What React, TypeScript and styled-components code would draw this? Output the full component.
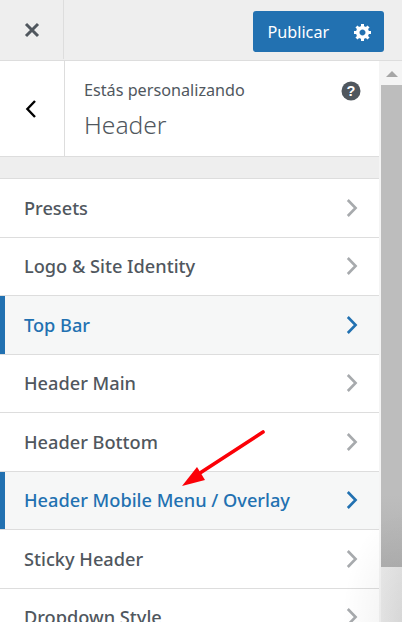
import styled, { createGlobalStyle } from "styled-components";

const GlobalStyle = createGlobalStyle`
  html, body {
    margin: 0;
    padding: 0;
    height: 100%;
    overflow: hidden;
    background: #eeeeee;
  }
  * {
    box-sizing: border-box;
  }
`;

const Page = styled.div`
  position: relative;
  width: 402px;
  height: 622px;
  overflow: hidden;
  display: flex;
  flex-direction: column;
  background: #eeeeee;
  font-family: "Noto Sans", "Open Sans", sans-serif;
`;

const TopBar = styled.div`
  flex: none;
  height: 61px;
  display: flex;
  align-items: stretch;
  justify-content: space-between;
  padding-right: 18px;
  border-bottom: 1px solid #dddddd;
`;

const CloseButton = styled.div`
  width: 64px;
  height: 59px;
  display: flex;
  align-items: center;
  justify-content: center;
  border-right: 1px solid #dddddd;
  padding: 1px 0 0 1px;
`;

const PublishGroup = styled.div`
  margin-top: 11px;
  width: 131px;
  height: 41px;
  display: flex;
  align-items: center;
  background: #2271b1;
  border-radius: 3px;
  color: #ffffff;
`;

const PublishLabel = styled.span`
  flex: 1;
  padding-left: 14.5px;
  font-size: 16.2px;
  line-height: 22px;
`;

const GearSlot = styled.span`
  width: 43px;
  display: flex;
  justify-content: center;
  padding-left: 1px;
`;

const Body = styled.div`
  flex: 1;
  display: flex;
  min-height: 0;
  background: linear-gradient(90deg, #eeeeee 379px, #f4f4f4 379px);
`;

const Panel = styled.div`
  width: 379px;
  flex: none;
`;

const SectionHead = styled.div`
  height: 96px;
  display: flex;
  background: #ffffff;
  border-bottom: 1px solid #dddddd;
`;

const BackButton = styled.div`
  width: 65px;
  display: flex;
  align-items: center;
  justify-content: center;
  border-right: 1px solid #dddddd;
  padding-right: 2px;
`;

const HeadText = styled.div`
  position: relative;
  flex: 1;
  padding: 18px 0 0 19px;
`;

const Eyebrow = styled.div`
  font-size: 16.2px;
  line-height: 22px;
  color: #50575e;
`;

const SectionTitle = styled.div`
  margin-top: 7px;
  font-size: 24.6px;
  font-weight: 300;
  line-height: 33px;
  color: #50575e;
`;

const HelpBadge = styled.span`
  position: absolute;
  top: 20px;
  right: 18px;
  display: flex;
`;

const MenuList = styled.ul`
  list-style: none;
  margin: 21px 0 0;
  padding: 0;
  background: #ffffff;
  border-top: 1px solid #dddddd;
`;

const MenuRow = styled.li<{ $active?: boolean }>`
  height: 58.5px;
  display: flex;
  align-items: center;
  justify-content: space-between;
  padding: 0 21px 0 24px;
  border-bottom: 1px solid #dddddd;
  font-size: 18.2px;
  font-weight: 500;
  color: ${(p) => (p.$active ? "#2271b1" : "#50575e")};
  background: ${(p) => (p.$active ? "#f6f7f7" : "#ffffff")};
  box-shadow: ${(p) => (p.$active ? "inset 5px 0 0 #2271b1" : "none")};
`;

const Scrollbar = styled.div`
  flex: 1;
  margin-left: 2px;
  display: flex;
  flex-direction: column;
  background: linear-gradient(90deg, #ebebeb, #e4e4e4);
`;

const ScrollUp = styled.div`
  height: 24px;
  display: flex;
  justify-content: center;
  padding-top: 10px;
  background: #f4f4f4;
`;

const ScrollThumb = styled.div`
  height: 482px;
  background: linear-gradient(180deg, #bdbdbd 85%, #b0b0b0);
`;

const CornerShade = styled.div`
  position: absolute;
  right: 0;
  bottom: 0;
  width: 60px;
  height: 110px;
  pointer-events: none;
  background: radial-gradient(
    farthest-side at 100% 100%,
    rgba(0, 0, 0, 0.06),
    rgba(0, 0, 0, 0)
  );
`;

const ArrowOverlay = styled.svg`
  position: absolute;
  left: 175px;
  top: 424px;
`;

function Chevron({ active }: { active?: boolean }) {
  return (
    <svg width="12" height="20" viewBox="0 0 12 20" fill="none">
      <path
        d="M1.8 2 L9.6 10 L1.8 18"
        stroke={active ? "#2271b1" : "#a7aaad"}
        strokeWidth="2.6"
      />
    </svg>
  );
}

const items = [
  { label: "Presets" },
  { label: "Logo & Site Identity" },
  { label: "Top Bar", active: true },
  { label: "Header Main" },
  { label: "Header Bottom" },
  { label: "Header Mobile Menu / Overlay", active: true },
  { label: "Sticky Header" },
  { label: "Dropdown Style" },
];

export default function App() {
  return (
    <Page>
      <GlobalStyle />
      <TopBar>
        <CloseButton>
          <svg width="16" height="16" viewBox="0 0 16 16">
            <path
              d="M2 2 L14 14 M14 2 L2 14"
              stroke="#50575e"
              strokeWidth="3"
            />
          </svg>
        </CloseButton>
        <PublishGroup>
          <PublishLabel>Publicar</PublishLabel>
          <GearSlot>
            <svg width="20" height="20" viewBox="0 0 20 20" fill="#ffffff">
              <path d="M18 12h-2.18c-.17.7-.44 1.35-.81 1.93l1.54 1.54-2.1 2.1-1.54-1.54c-.58.36-1.23.63-1.91.79V19H8v-2.18c-.68-.16-1.33-.43-1.91-.79l-1.54 1.54-2.12-2.12 1.54-1.54c-.36-.58-.63-1.23-.79-1.91H1V9.03h2.17c.16-.7.44-1.35.8-1.94L2.43 5.55l2.1-2.1 1.54 1.54c.58-.37 1.24-.64 1.93-.81V2h3v2.18c.68.16 1.33.43 1.91.79l1.54-1.54 2.12 2.12-1.54 1.54c.36.59.64 1.24.8 1.94H18V12zm-8.5 1.5c1.66 0 3-1.34 3-3s-1.34-3-3-3-3 1.34-3 3 1.34 3 3 3z" />
            </svg>
          </GearSlot>
        </PublishGroup>
      </TopBar>
      <Body>
        <Panel>
          <SectionHead>
            <BackButton>
              <svg width="12" height="20" viewBox="0 0 12 20" fill="none">
                <path d="M10 2 L2.4 10 L10 18" stroke="#000000" strokeWidth="2.4" />
              </svg>
            </BackButton>
            <HeadText>
              <Eyebrow>Estás personalizando</Eyebrow>
              <SectionTitle>Header</SectionTitle>
              <HelpBadge>
                <svg width="20" height="20" viewBox="0 0 20 20">
                  <circle cx="10" cy="10" r="9.5" fill="#50575e" />
                  <text
                    x="10"
                    y="15"
                    fontSize="14.5"
                    fontWeight="700"
                    fill="#ffffff"
                    textAnchor="middle"
                    fontFamily="Liberation Sans, sans-serif"
                  >
                    ?
                  </text>
                </svg>
              </HelpBadge>
            </HeadText>
          </SectionHead>
          <MenuList>
            {items.map((item) => (
              <MenuRow key={item.label} $active={item.active}>
                {item.label}
                <Chevron active={item.active} />
              </MenuRow>
            ))}
          </MenuList>
        </Panel>
        <Scrollbar>
          <ScrollUp>
            <svg width="12" height="6" viewBox="0 0 12 6">
              <path d="M6 0 L12 6 L0 6 Z" fill="#a6a6a6" />
            </svg>
          </ScrollUp>
          <ScrollThumb />
        </Scrollbar>
      </Body>
      <CornerShade />
      <ArrowOverlay width="95" height="66" viewBox="0 0 95 66">
        <path d="M88 8 L25 49" stroke="#fb0007" strokeWidth="3.6" strokeLinecap="round" />
        <path d="M7 62 L22 43 L30 56 Z" fill="#fb0007" />
      </ArrowOverlay>
    </Page>
  );
}
